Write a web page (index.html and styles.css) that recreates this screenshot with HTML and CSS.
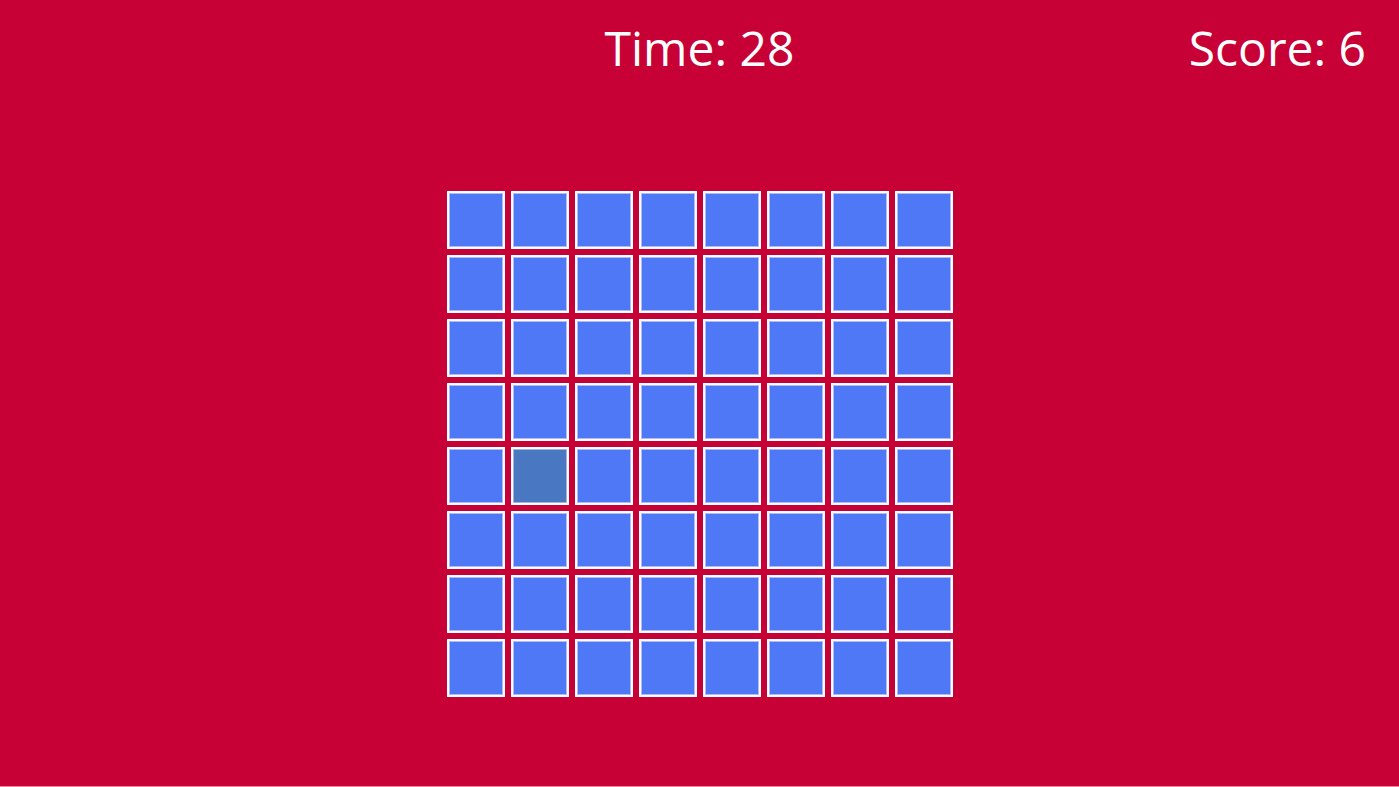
FILE: index.html
```html
<!DOCTYPE html>
<html>
<head>
<meta charset="utf-8">
<link rel="stylesheet" href="styles.css">
</head>
<body>
<div class="app">
  <header class="hud">
    <div class="spacer"></div>
    <div class="time">Time: 28</div>
    <div class="score">Score: 6</div>
  </header>
  <main class="board-wrap">
    <div class="board">
      <div class="cell"></div><div class="cell"></div><div class="cell"></div><div class="cell"></div><div class="cell"></div><div class="cell"></div><div class="cell"></div><div class="cell"></div>
      <div class="cell"></div><div class="cell"></div><div class="cell"></div><div class="cell"></div><div class="cell"></div><div class="cell"></div><div class="cell"></div><div class="cell"></div>
      <div class="cell"></div><div class="cell"></div><div class="cell"></div><div class="cell"></div><div class="cell"></div><div class="cell"></div><div class="cell"></div><div class="cell"></div>
      <div class="cell"></div><div class="cell"></div><div class="cell"></div><div class="cell"></div><div class="cell"></div><div class="cell"></div><div class="cell"></div><div class="cell"></div>
      <div class="cell"></div><div class="cell odd"></div><div class="cell"></div><div class="cell"></div><div class="cell"></div><div class="cell"></div><div class="cell"></div><div class="cell"></div>
      <div class="cell"></div><div class="cell"></div><div class="cell"></div><div class="cell"></div><div class="cell"></div><div class="cell"></div><div class="cell"></div><div class="cell"></div>
      <div class="cell"></div><div class="cell"></div><div class="cell"></div><div class="cell"></div><div class="cell"></div><div class="cell"></div><div class="cell"></div><div class="cell"></div>
      <div class="cell"></div><div class="cell"></div><div class="cell"></div><div class="cell"></div><div class="cell"></div><div class="cell"></div><div class="cell"></div><div class="cell"></div>
    </div>
  </main>
</div>
</body>
</html>
```

FILE: styles.css
```css
html, body {
  margin: 0;
  padding: 0;
  height: 100%;
}
body {
  background: #c70036;
  font-family: "Open Sans", "Noto Sans", sans-serif;
  color: #ffffff;
  overflow: hidden;
}
.app {
  height: 787px;
  box-sizing: border-box;
  border-bottom: 1px solid #ee8aa2;
}
.hud {
  display: grid;
  grid-template-columns: 1fr auto 1fr;
  align-items: start;
  height: 96px;
  padding: 0 33px;
  box-sizing: border-box;
}
.time, .score {
  font-size: 48px;
  line-height: 1;
  padding-top: 24px;
}
.time {
  transform: translateX(0);
}
.score {
  justify-self: end;
}
.board-wrap {
  display: flex;
  justify-content: center;
  padding-top: 95px;
}
.board {
  display: grid;
  grid-template-columns: repeat(8, 58px);
  grid-auto-rows: 58px;
  gap: 6px;
}
.cell {
  background: #4f78f7;
  border: 2px solid #ffffff;
  box-shadow: inset 0 0 0 1px #a9bdfb;
  box-sizing: border-box;
}
.cell.odd {
  background: #4a77c1;
  box-shadow: inset 0 0 0 1px #9eb5dd;
}
```
